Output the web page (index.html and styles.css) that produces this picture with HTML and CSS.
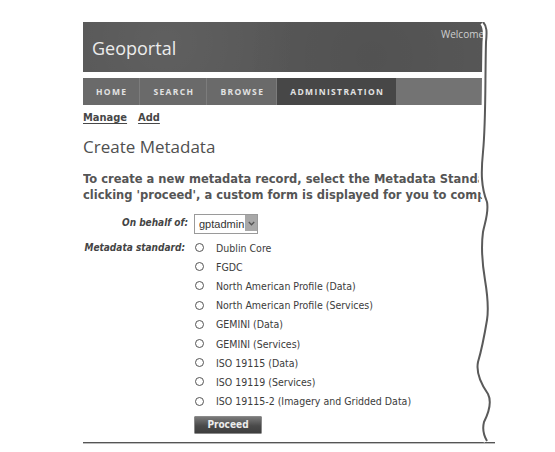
FILE: index.html
```html
<!DOCTYPE html>
<html lang="en">
<head>
<meta charset="utf-8">
<title>Geoportal - Create Metadata</title>
<link rel="stylesheet" href="styles.css">
</head>
<body>
<div class="page">
  <div class="frame">
    <header class="masthead">
      <span class="brand">Geoportal</span>
      <span class="welcome">Welcome, gptadmin</span>
    </header>
    <nav class="tabs">
      <a class="tab">HOME</a>
      <a class="tab">SEARCH</a>
      <a class="tab">BROWSE</a>
      <a class="tab active">ADMINISTRATION</a>
      <span class="tab-fill"></span>
    </nav>
    <div class="subnav">
      <a class="sublink">Manage</a>
      <a class="sublink">Add</a>
    </div>
    <h1 class="title">Create Metadata</h1>
    <p class="intro">
      <span class="line">To create a new metadata record, select the Metadata Standard below and click 'proceed'. After</span>
      <span class="line">clicking 'proceed', a custom form is displayed for you to complete.</span>
    </p>
    <form class="form">
      <label class="field-label" for="owner">On behalf of:</label>
      <div class="field-value">
        <span class="select-wrap">
          <select id="owner" class="select"><option>gptadmin</option></select>
          <span class="select-arrow"><svg width="7" height="5" viewBox="0 0 7 5"><path d="M0.8 1 L3.5 3.8 L6.2 1" fill="none" stroke="#555" stroke-width="1.3"/></svg></span>
        </span>
      </div>
      <span class="field-label std">Metadata standard:</span>
      <div class="field-value options">
        <label class="opt"><input type="radio" name="std" class="radio"><span>Dublin Core</span></label>
        <label class="opt"><input type="radio" name="std" class="radio"><span>FGDC</span></label>
        <label class="opt"><input type="radio" name="std" class="radio"><span>North American Profile (Data)</span></label>
        <label class="opt"><input type="radio" name="std" class="radio"><span>North American Profile (Services)</span></label>
        <label class="opt"><input type="radio" name="std" class="radio"><span>GEMINI (Data)</span></label>
        <label class="opt"><input type="radio" name="std" class="radio"><span>GEMINI (Services)</span></label>
        <label class="opt"><input type="radio" name="std" class="radio"><span>ISO 19115 (Data)</span></label>
        <label class="opt"><input type="radio" name="std" class="radio"><span>ISO 19119 (Services)</span></label>
        <label class="opt"><input type="radio" name="std" class="radio"><span>ISO 19115-2 (Imagery and Gridded Data)</span></label>
        <button type="button" class="proceed">Proceed</button>
      </div>
    </form>
    <div class="rule"></div>
    <svg class="tear" width="412" height="422" viewBox="0 0 412 422">
      <path d="M400,0 C404,4 404,10 403,20 C402,60 403,100 400,130 C398,150 398,165 404,180 C406,190 402,200 400,210 C398,225 399,240 402,258 C404,270 406,285 404,298 C402,310 398,330 395,340 C393,350 398,362 405,372 C409,380 405,392 401,400 C399,408 401,414 404,419 L412,419 L412,0 Z" fill="#fff"/>
      <path d="M400,0 C404,4 404,10 403,20 C402,60 403,100 400,130 C398,150 398,165 404,180 C406,190 402,200 400,210 C398,225 399,240 402,258 C404,270 406,285 404,298 C402,310 398,330 395,340 C393,350 398,362 405,372 C409,380 405,392 401,400 C399,408 401,414 404,419" fill="none" stroke="#fff" stroke-width="7"/>
      <path d="M400,0 C404,4 404,10 403,20 C402,60 403,100 400,130 C398,150 398,165 404,180 C406,190 402,200 400,210 C398,225 399,240 402,258 C404,270 406,285 404,298 C402,310 398,330 395,340 C393,350 398,362 405,372 C409,380 405,392 401,400 C399,408 401,414 404,419" fill="none" stroke="#5a5a5a" stroke-width="2"/>
    </svg>
  </div>
</div>
</body>
</html>
```
FILE: styles.css
```css
html, body {
  margin: 0;
  padding: 0;
  background: #fff;
}
.page {
  padding: 22px 0 0 83px;
}
.frame {
  position: relative;
  width: 412px;
  overflow: hidden;
  color: #4a4a4a;
  font-family: "DejaVu Sans", Verdana, sans-serif;
}
.masthead {
  height: 50px;
  background: #575757;
  background-image:
    radial-gradient(circle at 20% 40%, rgba(255,255,255,0.05), transparent 40%),
    radial-gradient(circle at 70% 70%, rgba(0,0,0,0.06), transparent 45%);
  display: grid;
  grid-template-columns: 358px 1fr;
  overflow: hidden;
}
.brand {
  font-family: "Open Sans", sans-serif;
  font-size: 18px;
  color: #ececec;
  padding: 14px 0 0 9px;
  line-height: 24px;
}
.welcome {
  font-family: "Open Sans", sans-serif;
  font-size: 10px;
  color: #cfcfcf;
  white-space: nowrap;
  padding-top: 5px;
  line-height: 14px;
}
.tabs {
  margin-top: 6px;
  height: 27px;
  display: flex;
  background: #737373;
}
.tab {
  display: flex;
  align-items: center;
  padding: 0 12px 0 13px;
  font-family: "Open Sans", sans-serif;
  font-weight: 700;
  font-size: 8.5px;
  letter-spacing: 1.35px;
  color: #e2e2e2;
  background: #6a6a6a;
  border-right: 1px solid #7c7c7c;
}
.tab.active {
  background: #474747;
  border-right: none;
}
.tab-fill {
  flex: 1;
  background: #737373;
}
.subnav {
  margin-top: 6px;
  display: flex;
  gap: 11px;
  line-height: 14px;
}
.sublink {
  font-family: "DejaVu Sans Condensed", "DejaVu Sans", sans-serif;
  font-weight: 700;
  font-size: 11px;
  color: #474747;
  text-decoration: underline;
  text-underline-offset: 2px;
}
.title {
  margin: 11px 0 0;
  font-family: "Open Sans", sans-serif;
  font-weight: 400;
  font-size: 17px;
  line-height: 22px;
  color: #505050;
}
.intro {
  margin: 13px 0 0;
  font-family: "DejaVu Sans", Verdana, sans-serif;
  font-weight: 700;
  font-size: 11.5px;
  line-height: 16px;
  color: #555;
}
.line {
  display: block;
  white-space: nowrap;
}
.form {
  margin-top: 10px;
  display: grid;
  grid-template-columns: 105px 1fr;
  column-gap: 6px;
  row-gap: 5px;
  align-items: start;
}
.field-label {
  text-align: right;
  font-family: "DejaVu Sans Condensed", "DejaVu Sans", sans-serif;
  font-weight: 700;
  font-style: italic;
  font-size: 10px;
  color: #444;
  line-height: 19px;
}
.field-label.std {
  padding-right: 3px;
}
.select-wrap {
  position: relative;
  display: inline-block;
  width: 64px;
  height: 20px;
}
.select {
  appearance: none;
  -webkit-appearance: none;
  box-sizing: border-box;
  width: 64px;
  height: 20px;
  margin: 0;
  padding: 0 0 0 4px;
  border: 1px solid #9a9a9a;
  border-radius: 0;
  background: #fff;
  font-family: "Liberation Sans", Arial, sans-serif;
  font-size: 11px;
  color: #333;
}
.select-arrow {
  position: absolute;
  top: 2px;
  right: 1px;
  width: 12px;
  height: 16px;
  background: #a8a8a8;
  display: flex;
  align-items: center;
  justify-content: center;
  pointer-events: none;
}
.options {
  display: flex;
  flex-direction: column;
  align-items: flex-start;
}
.opt {
  display: flex;
  align-items: center;
  height: 19.2px;
  font-family: "DejaVu Sans Condensed", "DejaVu Sans", sans-serif;
  font-size: 10.5px;
  color: #3c3c3c;
}
.radio {
  appearance: none;
  -webkit-appearance: none;
  box-sizing: border-box;
  width: 9px;
  height: 9px;
  margin: 0 12px 0 1px;
  border: 1.5px solid #555;
  border-radius: 50%;
  background: #fff;
}
.proceed {
  margin-top: 5px;
  box-sizing: border-box;
  width: 68px;
  height: 18px;
  padding: 0;
  border: 1px solid #8a8a8a;
  border-radius: 1px;
  background: linear-gradient(#7a7a7a, #4a4a4a 55%, #3e3e3e);
  color: #ececec;
  font-family: "DejaVu Sans Condensed", "DejaVu Sans", sans-serif;
  font-weight: 700;
  font-size: 10px;
}
.rule {
  margin-top: 8px;
  height: 1px;
  background: #555;
  border-bottom: 1px solid #bdbdbd;
  margin-left: -1px;
}
.tear {
  position: absolute;
  top: 0;
  left: 0;
}
```
